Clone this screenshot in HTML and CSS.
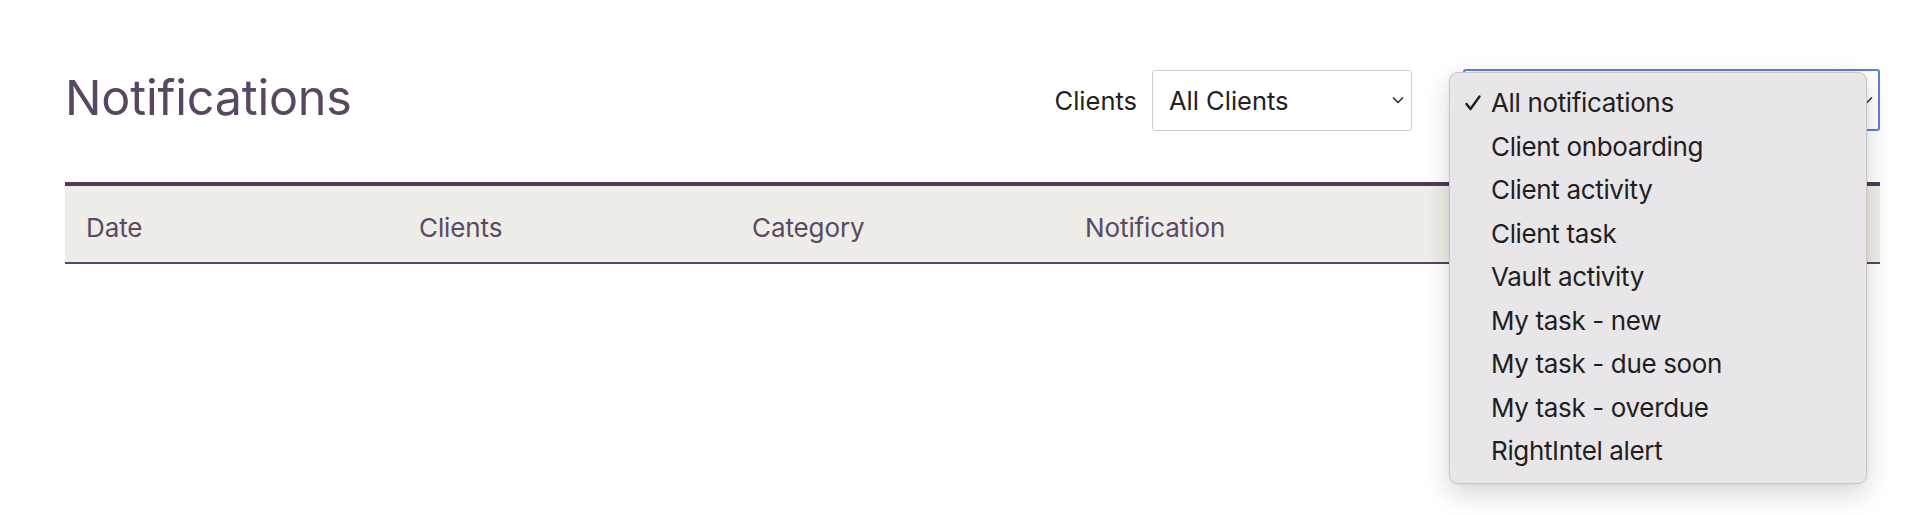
FILE: index.html
```html
<!DOCTYPE html>
<html lang="en">
<head>
<meta charset="utf-8">
<title>Notifications</title>
<link rel="stylesheet" href="styles.css">
</head>
<body>
<main class="page">
  <header class="topbar">
    <h1 class="title">Notifications</h1>
    <div class="filters">
      <span class="filter-label">Clients</span>
      <div class="select select-clients">
        <span class="select-value">All Clients</span>
        <svg class="chev" width="12" height="8" viewBox="0 0 12 8"><path d="M1 1.5 L6 6.5 L11 1.5" fill="none" stroke="#222" stroke-width="1.4"/></svg>
      </div>
      <div class="select-wrap">
        <div class="select select-focus">
          <span class="select-value">All notifications</span>
          <svg class="chev" width="12" height="8" viewBox="0 0 12 8"><path d="M1 1.5 L6 6.5 L11 1.5" fill="none" stroke="#222" stroke-width="1.4"/></svg>
        </div>
        <ul class="menu">
          <li class="menu-item checked"><svg class="check" width="18" height="18" viewBox="0 0 18 18"><path d="M2.5 10 L6.5 15 L15.5 2.5" fill="none" stroke="#1f1f1f" stroke-width="2.4" stroke-linecap="round" stroke-linejoin="round"/></svg>All notifications</li>
          <li class="menu-item">Client onboarding</li>
          <li class="menu-item">Client activity</li>
          <li class="menu-item">Client task</li>
          <li class="menu-item">Vault activity</li>
          <li class="menu-item">My task - new</li>
          <li class="menu-item">My task - due soon</li>
          <li class="menu-item">My task - overdue</li>
          <li class="menu-item">RightIntel alert</li>
        </ul>
      </div>
    </div>
  </header>
  <table class="grid">
    <thead>
      <tr>
        <th class="col">Date</th>
        <th class="col">Clients</th>
        <th class="col">Category</th>
        <th class="col">Notification</th>
        <th class="col-rest"></th>
      </tr>
    </thead>
  </table>
</main>
</body>
</html>
```
FILE: styles.css
```css
* { box-sizing: border-box; }
html, body { margin: 0; padding: 0; background: #ffffff; }
body { font-family: Inter, "Noto Sans", sans-serif; min-height: 515px; }

.page {
  padding: 69px 40px 0 65px;
  min-height: 515px;
}

.topbar {
  display: flex;
  align-items: center;
  justify-content: space-between;
  height: 62px;
}

.title {
  margin: 0;
  font-size: 48.5px;
  font-weight: 400;
  color: #574760;
  letter-spacing: -0.2px;
  line-height: 1;
  position: relative;
  top: -2px;
}

.filters {
  display: flex;
  align-items: center;
}

.filter-label {
  font-size: 25.5px;
  color: #222222;
  margin-right: 15px;
}

.select {
  display: flex;
  align-items: center;
  justify-content: space-between;
  background: #ffffff;
  border-radius: 3px;
  color: #222222;
  font-size: 25.5px;
}

.select-clients {
  width: 260px;
  height: 61px;
  border: 1px solid #cfcfcf;
  padding: 0 7px 0 16px;
  margin-right: 51px;
}

.select-wrap {
  position: relative;
}

.select-focus {
  width: 417px;
  height: 62px;
  border: 2px solid #5a7fe2;
  padding: 0 5px 0 15px;
}

.chev { display: block; }

.menu {
  position: absolute;
  left: -14px;
  top: 3px;
  width: 418px;
  margin: 0;
  padding: 8px 0 10px;
  list-style: none;
  background: #e9e6e9;
  border: 1px solid #c9c5c9;
  border-radius: 9px;
  box-shadow: 0 10px 26px rgba(0, 0, 0, 0.16), 0 0 4px rgba(0, 0, 0, 0.06);
  z-index: 2;
}

.menu-item {
  position: relative;
  height: 43.5px;
  line-height: 43.5px;
  padding-left: 41px;
  font-size: 26px;
  color: #1f1f1f;
  letter-spacing: -0.35px;
  white-space: nowrap;
}

.check {
  position: absolute;
  left: 14px;
  top: 13px;
}

.grid {
  width: 100%;
  margin-top: 51px;
  border-collapse: collapse;
  table-layout: fixed;
}

.grid thead tr {
  background: #efede8;
  border-top: 4px solid #4d3d58;
  border-bottom: 2px solid #56465f;
}

.grid th {
  height: 79px;
  padding: 6px 0 0 21px;
  text-align: left;
  font-weight: 400;
  font-size: 26px;
  color: #5a4a63;
  letter-spacing: -0.1px;
}

.grid th.col { width: 333px; }
```
